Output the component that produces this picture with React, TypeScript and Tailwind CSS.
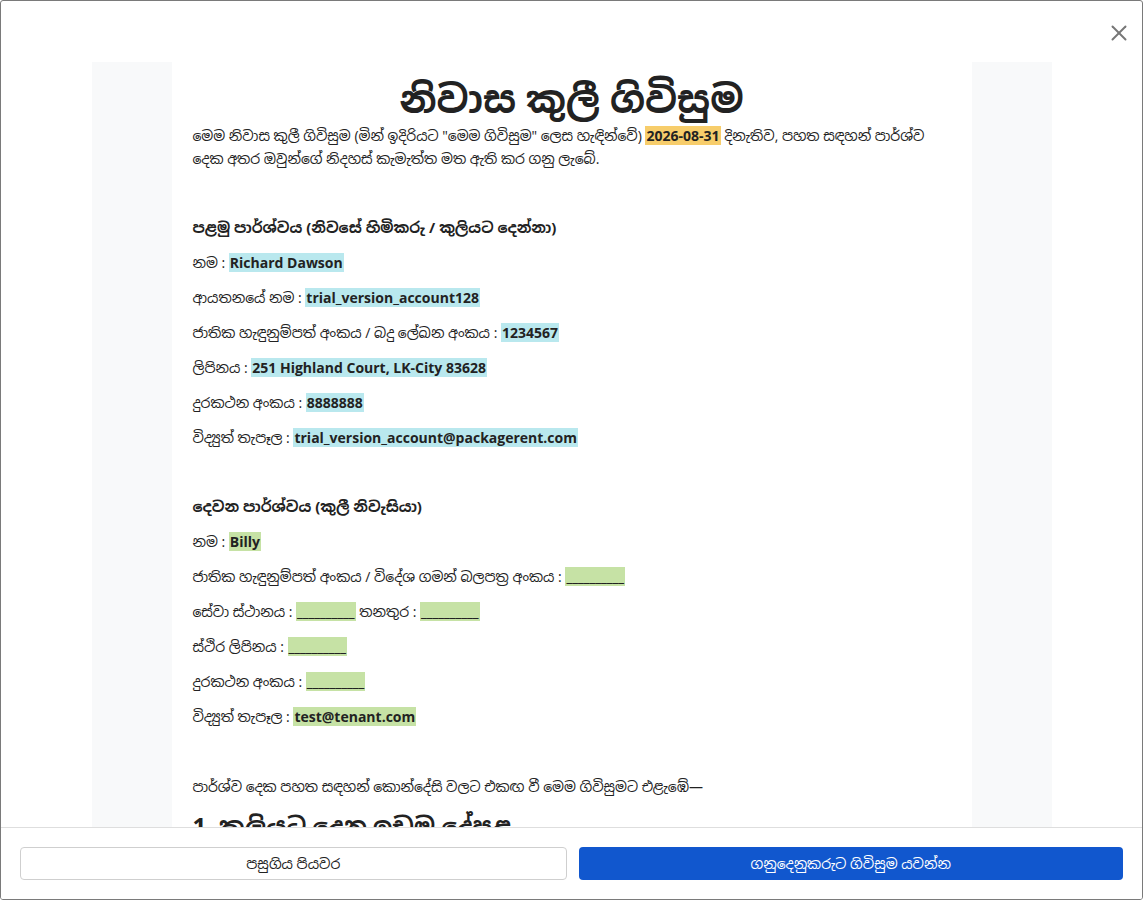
import React from 'react'
import { X } from 'lucide-react'

const landlord = [
  { label: 'නම', value: 'Richard Dawson' },
  { label: 'ආයතනයේ නම', value: 'trial_version_account128' },
  { label: 'ජාතික හැඳුනුම්පත් අංකය / බදු ලේඛන අංකය', value: '1234567' },
  { label: 'ලිපිනය', value: '251 Highland Court, LK-City 83628' },
  { label: 'දුරකථන අංකය', value: '8888888' },
  { label: 'විද්‍යුත් තැපෑල', value: 'trial_version_account@packagerent.com' },
]

const Field = ({ label, value, color }: { label: string; value: string; color: string }) => (
  <p className="mb-[12px] leading-[23px]">
    {label} : <span className={`${color} px-[1px] font-bold`}>{value}</span>
  </p>
)

export default function App() {
  const blank = '__________'
  return (
    <div
      className="flex h-[900px] w-[1143px] flex-col overflow-hidden rounded-[3px] border border-[#7a7a7a] bg-white text-[#222]"
      style={{ fontFamily: '"Open Sans", "Noto Sans", "Noto Sans Sinhala", "Iskoola Pota", sans-serif' }}
    >
      <div className="relative min-h-0 flex-1 overflow-hidden pt-[61px]">
        <button className="absolute right-[10px] top-[19px] text-[#777]">
          <X className="h-[26px] w-[26px]" strokeWidth={1.8} />
        </button>
        <div className="mx-auto w-[960px] bg-[#f8f9fa] px-[80px]">
          <div className="bg-white px-[21px] pb-[40px] pt-[10px] text-[14px]">
            <h1 className="text-center text-[38px] font-bold leading-[52px]">නිවාස කුලී ගිවිසුම</h1>
            <p className="leading-[23px]">
              මෙම නිවාස කුලී ගිවිසුම (මින් ඉදිරියට "මෙම ගිවිසුම" ලෙස හැඳින්වේ){' '}
              <span className="bg-[#f7cd6b] px-[1px] font-bold">2026-08-31</span> දිනැතිව, පහත සඳහන් පාර්ශ්ව
              දෙක අතර ඔවුන්ගේ නිදහස් කැමැත්ත මත ඇති කර ගනු ලැබේ.
            </p>

            <h3 className="mb-[12px] mt-[46px] text-[15px] font-bold leading-[23px]">
              පළමු පාර්ශ්වය (නිවසේ හිමිකරු / කුලියට දෙන්නා)
            </h3>
            {landlord.map((f) => (
              <Field key={f.label} label={f.label} value={f.value} color="bg-[#b9e8ee]" />
            ))}

            <h3 className="mb-[12px] mt-[46px] text-[15px] font-bold leading-[23px]">
              දෙවන පාර්ශ්වය (කුලී නිවැසියා)
            </h3>
            <Field label="නම" value="Billy" color="bg-[#c6e2a5]" />
            <Field label="ජාතික හැඳුනුම්පත් අංකය / විදේශ ගමන් බලපත්‍ර අංකය" value={blank} color="bg-[#c6e2a5]" />
            <p className="mb-[12px] leading-[23px]">
              සේවා ස්ථානය : <span className="bg-[#c6e2a5] px-[1px] font-bold">{blank}</span> තනතුර :{' '}
              <span className="bg-[#c6e2a5] px-[1px] font-bold">{blank}</span>
            </p>
            <Field label="ස්ථිර ලිපිනය" value={blank} color="bg-[#c6e2a5]" />
            <Field label="දුරකථන අංකය" value={blank} color="bg-[#c6e2a5]" />
            <Field label="විද්‍යුත් තැපෑල" value="test@tenant.com" color="bg-[#c6e2a5]" />

            <p className="mt-[47px] leading-[23px]">
              පාර්ශ්ව දෙක පහත සඳහන් කොන්දේසි වලට එකඟ වී මෙම ගිවිසුමට එළැඹේ—
            </p>
            <h2 className="mt-[12px] text-[24px] font-bold leading-[32px]">1. කුලියට දෙන ඉඩම දේපළ</h2>
            <p className="mt-[12px] leading-[23px]">
              කුලියට දෙන්නා විසින් පහත සඳහන් දේපළ කුලී නිවැසියාට කුලියට ලබා දෙයි.
            </p>
          </div>
        </div>
      </div>
      <div className="flex gap-[12px] border-t border-[#dedede] bg-white px-[19px] pb-[19px] pt-[19px]">
        <button className="h-[33px] flex-1 rounded-[4px] border border-[#cfcfcf] bg-white text-[14px] text-[#222]">
          පසුගිය පියවර
        </button>
        <button className="h-[33px] flex-1 rounded-[4px] bg-[#1157ce] text-[14px] text-white">
          ගනුදෙනුකරුට ගිවිසුම යවන්න
        </button>
      </div>
    </div>
  )
}
